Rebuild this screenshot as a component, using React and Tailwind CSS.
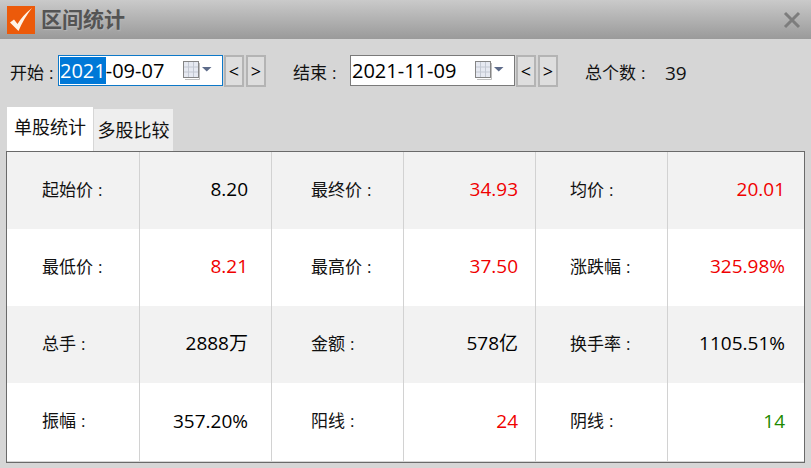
const font = { fontFamily: '"Open Sans","Noto Sans CJK SC",sans-serif' };

function CalendarIcon() {
  return (
    <svg width="30" height="20" viewBox="0 0 30 20" className="shrink-0">
      <rect x="0.5" y="0.5" width="15" height="16" fill="#e6e9f1" stroke="#858585" />
      <path d="M16.5 2v16.5H2" fill="none" stroke="#bdbdbd" />
      <path d="M5.5 1v15M10.5 1v15M1 6h14M1 11h14" stroke="#c3c8d2" />
      <path d="M19 6h9.5l-4.75 4.5z" fill="#5d6b8a" />
    </svg>
  );
}

function Label({ text, className = "" }) {
  return (
    <span className={`inline-flex items-center text-[17px] leading-[24px] text-[#111] ${className}`}>
      {text}
      <span className="ml-[5px]">:</span>
    </span>
  );
}

function DateField({ value, selected }) {
  return (
    <div className={`flex h-[31px] w-[165px] items-center justify-between border bg-white pl-[1px] pr-[9px] ${selected ? "border-[#0d78c8]" : "border-[#7a7a7a]"}`}>
      <span className="text-[20px] leading-[24px] text-black">
        {selected ? <span className="bg-[#0078d7] text-white">2021</span> : null}
        {value}
      </span>
      <CalendarIcon />
    </div>
  );
}

function StepButton({ label }) {
  return (
    <div className="flex h-[32px] w-[20px] items-center justify-center border-2 border-[#b4b4b4] bg-[#dedede] text-[18px] leading-none text-black">
      {label}
    </div>
  );
}

const rows = [
  ["起始价", "8.20", "", "最终价", "34.93", "r", "均价", "20.01", "r"],
  ["最低价", "8.21", "r", "最高价", "37.50", "r", "涨跌幅", "325.98%", "r"],
  ["总手", "2888万", "", "金额", "578亿", "", "换手率", "1105.51%", ""],
  ["振幅", "357.20%", "", "阳线", "24", "r", "阴线", "14", "g"],
];

const tone = { "": "text-black", r: "text-[#f00000]", g: "text-[#1d8a00]" };
const labelPad = ["pl-[35px]", "pl-[39px]", "pl-[34px]"];
const valuePad = ["pr-[23px]", "pr-[17px]", "pr-[19px]"];

function Row({ cells, shaded, height }) {
  const groups = [cells.slice(0, 3), cells.slice(3, 6), cells.slice(6, 9)];
  return (
    <div className={`grid grid-cols-[133px_132px_132px_132px_132px_136px] ${height} ${shaded ? "bg-[#f2f2f2]" : "bg-white"}`}>
      {groups.map((g, i) => [
        <div key={`l${i}`} className={`flex items-center border-r border-[#d2d2d2] pb-[2px] ${labelPad[i]}`}>
          <Label text={g[0]} />
        </div>,
        <div key={`v${i}`} className={`flex items-center justify-end pb-[2px] text-[19px] ${valuePad[i]} ${i === 2 ? "" : "border-r border-[#d2d2d2]"} ${tone[g[2]]}`}>
          {g[1]}
        </div>,
      ])}
    </div>
  );
}

export default function App() {
  return (
    <div className="flex h-[468px] w-[811px] flex-col overflow-hidden bg-[#d6d6d6]" style={font}>
      <header className="flex h-[39px] items-center justify-between bg-gradient-to-b from-[#cacaca] to-[#9a9a9a] pl-[7px] pr-[10px]">
        <div className="flex items-center gap-[6px]">
          <svg width="28" height="28" viewBox="0 0 28 28" className="shrink-0">
            <rect width="28" height="28" fill="#ec5a0a" />
            <path d="M3 16.5L7 13.5L10.5 18Q16 9 25 2Q17 12 11.5 25Z" fill="#fff3e6" />
          </svg>
          <span className="text-[21px] font-bold leading-none text-[#545454] [text-shadow:1px_1px_1px_#b5b5b5]">区间统计</span>
        </div>
        <svg width="18" height="18" viewBox="0 0 18 18">
          <path d="M2 2l14 14M16 2L2 16" stroke="#7d7d7d" strokeWidth="3" />
        </svg>
      </header>

      <div className="flex h-[68px] items-start pl-[10px] pt-[16px]">
        <Label text="开始" className="mt-[6px] w-[48px]" />
        <DateField value="-09-07" selected />
        <div className="ml-[1px] flex gap-[2px]">
          <StepButton label="<" />
          <StepButton label=">" />
        </div>
        <Label text="结束" className="ml-[27px] mt-[6px] w-[57px]" />
        <DateField value="2021-11-09" />
        <div className="ml-[1px] flex gap-[2px]">
          <StepButton label="<" />
          <StepButton label=">" />
        </div>
        <Label text="总个数" className="ml-[27px] mt-[6px] w-[80px]" />
        <span className="mt-[6px] text-[19px] leading-[24px] text-[#111]">39</span>
      </div>

      <div className="flex h-[44px] items-end pl-[7px] text-[18px] text-[#111]">
        <div className="flex h-[44px] w-[86px] items-center justify-center bg-white pb-[3px]">单股统计</div>
        <div className="ml-[1px] flex h-[42px] w-[79px] items-center justify-center bg-[#eeeeee]">多股比较</div>
      </div>

      <div className="mx-[6px] flex h-[312px] flex-col border border-[#6a6a6a]">
        {rows.map((r, i) => (
          <Row key={i} cells={r} shaded={i % 2 === 0} height={i === 3 ? "h-[78px]" : "h-[77px]"} />
        ))}
      </div>
    </div>
  );
}
